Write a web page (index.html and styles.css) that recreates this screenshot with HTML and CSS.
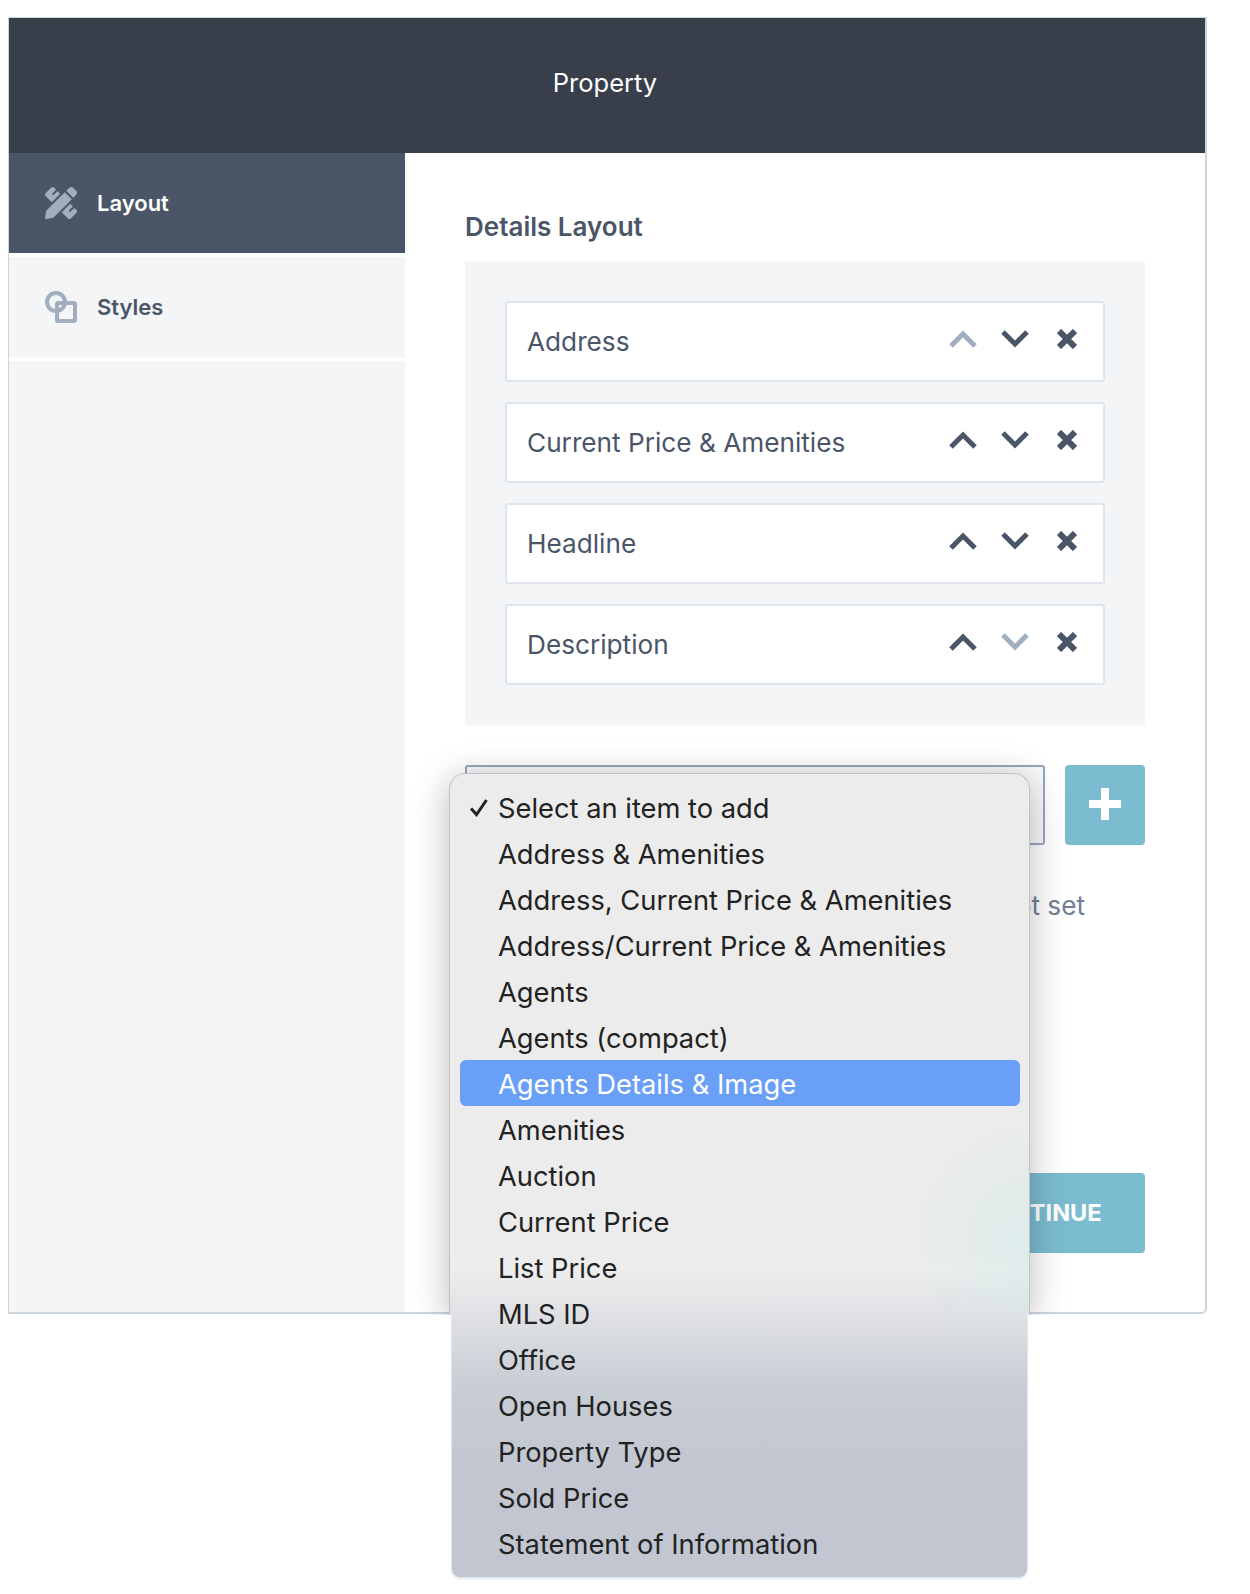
FILE: index.html
```html
<!DOCTYPE html>
<html lang="en">
<head>
<meta charset="utf-8">
<title>Property</title>
<link rel="stylesheet" href="styles.css">
</head>
<body>
<div class="panel">
  <header class="panel-header">Property</header>
  <div class="panel-body">
    <nav class="sidebar">
      <a class="nav-item nav-item-active">
        <svg class="nav-icon" viewBox="0 0 512 512"><path d="M109.46 244.04l134.58-134.56-44.12-44.12-61.68 61.68a7.919 7.919 0 0 1-11.21 0l-11.21-11.21c-3.1-3.1-3.1-8.12 0-11.21l61.68-61.68-33.64-33.65C131.47-3.1 111.39-3.1 99 9.29L9.29 99c-12.38 12.39-12.39 32.47 0 44.86l100.17 100.18zm388.47-116.8c18.76-18.76 18.75-49.17 0-67.93l-45.25-45.25c-18.76-18.76-49.18-18.76-67.95 0l-46.02 46.01 113.2 113.2 46.02-46.03zM316.08 82.71l-297 296.96L.32 487.11c-2.53 14.49 10.09 27.11 24.59 24.56l107.45-18.84L429.28 195.9 316.08 82.71zm186.63 285.43l-33.64-33.64-61.68 61.68c-3.1 3.1-8.12 3.1-11.21 0l-11.21-11.21c-3.09-3.1-3.09-8.12 0-11.21l61.68-61.68-44.14-44.14L267.93 402.5l100.21 100.2c12.39 12.39 32.47 12.39 44.86 0l89.71-89.7c12.39-12.39 12.39-32.47 0-44.86z"/></svg>
        <span>Layout</span>
      </a>
      <a class="nav-item">
        <svg class="nav-icon nav-icon-line" viewBox="0 0 32 32"><circle cx="11" cy="11" r="9"/><rect x="12" y="12" width="18" height="18" rx="1"/></svg>
        <span>Styles</span>
      </a>
      <div class="sidebar-rest"></div>
    </nav>
    <main class="content">
      <h2 class="section-title">Details Layout</h2>
      <div class="rows-box">
        <div class="row"><span>Address</span><div class="row-actions">
          <svg class="act act-muted" viewBox="0 0 28 18"><path d="M2 16L14 4l12 12"/></svg>
          <svg class="act" viewBox="0 0 28 18"><path d="M2 2l12 12L26 2"/></svg>
          <svg class="act act-x" viewBox="0 0 20 20"><path d="M2 2l16 16M18 2L2 18"/></svg>
        </div></div>
        <div class="row"><span>Current Price &amp; Amenities</span><div class="row-actions">
          <svg class="act" viewBox="0 0 28 18"><path d="M2 16L14 4l12 12"/></svg>
          <svg class="act" viewBox="0 0 28 18"><path d="M2 2l12 12L26 2"/></svg>
          <svg class="act act-x" viewBox="0 0 20 20"><path d="M2 2l16 16M18 2L2 18"/></svg>
        </div></div>
        <div class="row"><span>Headline</span><div class="row-actions">
          <svg class="act" viewBox="0 0 28 18"><path d="M2 16L14 4l12 12"/></svg>
          <svg class="act" viewBox="0 0 28 18"><path d="M2 2l12 12L26 2"/></svg>
          <svg class="act act-x" viewBox="0 0 20 20"><path d="M2 2l16 16M18 2L2 18"/></svg>
        </div></div>
        <div class="row"><span>Description</span><div class="row-actions">
          <svg class="act" viewBox="0 0 28 18"><path d="M2 16L14 4l12 12"/></svg>
          <svg class="act act-muted" viewBox="0 0 28 18"><path d="M2 2l12 12L26 2"/></svg>
          <svg class="act act-x" viewBox="0 0 20 20"><path d="M2 2l16 16M18 2L2 18"/></svg>
        </div></div>
      </div>
      <div class="add-row">
        <div class="select-box"></div>
        <button class="add-btn" type="button" aria-label="Add"><svg viewBox="0 0 32 32"><path d="M12 0h8v12h12v8H20v12h-8V20H0v-8h12z"/></svg></button>
      </div>
      <p class="helper">Not set</p>
      <div class="actions"><button class="continue-btn" type="button">CONTINUE</button></div>
    </main>
  </div>
  <ul class="menu">
    <li class="menu-item"><svg class="menu-check" viewBox="0 0 20 20"><path d="M2 10.500l5.500 6L17.500 2"/></svg>Select an item to add</li>
    <li class="menu-item">Address &amp; Amenities</li>
    <li class="menu-item">Address, Current Price &amp; Amenities</li>
    <li class="menu-item">Address/Current Price &amp; Amenities</li>
    <li class="menu-item">Agents</li>
    <li class="menu-item">Agents (compact)</li>
    <li class="menu-item menu-item-active">Agents Details &amp; Image</li>
    <li class="menu-item">Amenities</li>
    <li class="menu-item">Auction</li>
    <li class="menu-item">Current Price</li>
    <li class="menu-item">List Price</li>
    <li class="menu-item">MLS ID</li>
    <li class="menu-item">Office</li>
    <li class="menu-item">Open Houses</li>
    <li class="menu-item">Property Type</li>
    <li class="menu-item">Sold Price</li>
    <li class="menu-item">Statement of Information</li>
  </ul>
</div>
</body>
</html>
```

FILE: styles.css
```css
* { box-sizing: border-box; }
html, body { margin: 0; padding: 0; background: #fff; }
body {
  font-family: Inter, "Liberation Sans", sans-serif;
  height: 1594px;
  padding: 17px 43px 0 8px;
  overflow: hidden;
}
.panel {
  position: relative;
  height: 1297px;
  border: 1px solid #cbd5e0;
  border-right-width: 2px;
  border-bottom-width: 2px;
  border-radius: 0 0 6px 0;
}
.panel-header {
  height: 135px;
  background: #383e4a;
  color: #fff;
  font-size: 25.500px;
  display: flex;
  align-items: center;
  justify-content: center;
  padding: 0 4px 7px 0;
}
.panel-body { display: flex; height: 1159px; }
.sidebar {
  width: 396px;
  flex: none;
  display: flex;
  flex-direction: column;
  gap: 4px;
}
.nav-item {
  height: 100px;
  background: #f4f5f7;
  color: #4a5568;
  font-size: 22px;
  font-weight: 600;
  display: flex;
  align-items: center;
  gap: 20px;
  padding-left: 36px;
}
.nav-item-active { background: #4a5568; color: #fff; }
.nav-icon { width: 32px; height: 32px; fill: #a0aec0; flex: none; }
.nav-icon-line { fill: none; stroke: #a0aec0; stroke-width: 4; }
.sidebar-rest { flex: 1; background: #f4f5f7; }
.content { flex: 1; padding: 56px 60px 0; }
.section-title {
  margin: 0 0 16px;
  height: 36px;
  line-height: 36px;
  font-size: 26px;
  font-weight: 600;
  color: #4a5568;
}
.rows-box {
  background: #f4f5f7;
  padding: 40px;
  display: flex;
  flex-direction: column;
  gap: 20px;
}
.row {
  height: 81px;
  background: #fff;
  border: 2px solid #dfe5ec;
  border-radius: 3px;
  display: flex;
  align-items: center;
  justify-content: space-between;
  padding: 0 26px 0 20px;
  color: #4a5568;
  font-size: 26.200px;
}
.row-actions { display: flex; align-items: center; gap: 24px; margin-top: -5px; }
.act { width: 28px; height: 18px; fill: none; stroke: #4a5568; stroke-width: 5; flex: none; }
.act-muted { stroke: #a0aec0; }
.act-x { width: 20px; height: 20px; stroke-width: 6; margin-left: 4px; }
.add-row { display: flex; gap: 20px; margin-top: 40px; }
.select-box {
  flex: 1;
  height: 80px;
  background: #f8f9fa;
  border: 2px solid #98a6bd;
  border-radius: 3px;
}
.add-btn {
  width: 80px;
  height: 80px;
  background: #7bbcd0;
  border: 0;
  border-radius: 4px;
  padding: 0 0 3px;
  display: flex;
  align-items: center;
  justify-content: center;
}
.add-btn svg { width: 32px; height: 32px; fill: #fff; }
.helper {
  margin: 43px 60px 0 0;
  height: 36px;
  line-height: 36px;
  text-align: right;
  font-size: 26.200px;
  color: #718096;
}
.actions { display: flex; justify-content: flex-end; margin-top: 249px; }
.continue-btn {
  height: 80px;
  width: 212px;
  background: #7bbcd0;
  border: 0;
  border-radius: 4px;
  color: #fff;
  font: 700 23.500px Inter, "Liberation Sans", sans-serif;
  padding: 0 0 2px;
}
.menu {
  position: absolute;
  z-index: 1;
  left: 440px;
  top: 755px;
  width: 581px;
  height: 804px;
  margin: 0;
  padding: 11px 10px 12px 11px;
  list-style: none;
  color: #222;
  font-size: 27.300px;
}
.menu::before,
.menu::after {
  content: "";
  position: absolute;
  z-index: -1;
  top: 0;
  background:
    radial-gradient(ellipse 120px 120px at 100% 58%, rgba(212, 235, 233, .65), rgba(212, 235, 233, 0)),
    linear-gradient(#ececec 0, #ececec 480px, #eeeeee 495px, #c9cdd5 610px, #c1c6d0 700px, #c1c6d0 100%);
  background-size: 100% 804px;
  background-repeat: no-repeat;
}
.menu::before {
  left: 0;
  right: 0;
  height: 541px;
  border: 1px solid #c2c2c4;
  border-bottom: 0;
  border-radius: 16px 16px 0 0;
  background-origin: border-box;
  box-shadow: 0 6px 36px rgba(0, 0, 0, .28);
  clip-path: inset(-60px -60px 0 -60px);
}
.menu::after {
  left: 3px;
  right: 3px;
  bottom: 0;
  border-radius: 16px 16px 8px 8px;
  box-shadow: 0 2px 2px #dfe6f0, 1px 0 1px #dfe6f0, -1px 0 1px #dfe6f0;
  clip-path: inset(541px -4px -4px -4px);
}
.menu-item {
  position: relative;
  height: 46px;
  line-height: 49px;
  padding-left: 38px;
  white-space: nowrap;
  border-radius: 6px;
}
.menu-item-active { background: #6a9ff8; color: #fff; }
.menu-check {
  position: absolute;
  left: 9px;
  top: 14px;
  width: 20px;
  height: 20px;
  fill: none;
  stroke: #222;
  stroke-width: 3;
}
```
